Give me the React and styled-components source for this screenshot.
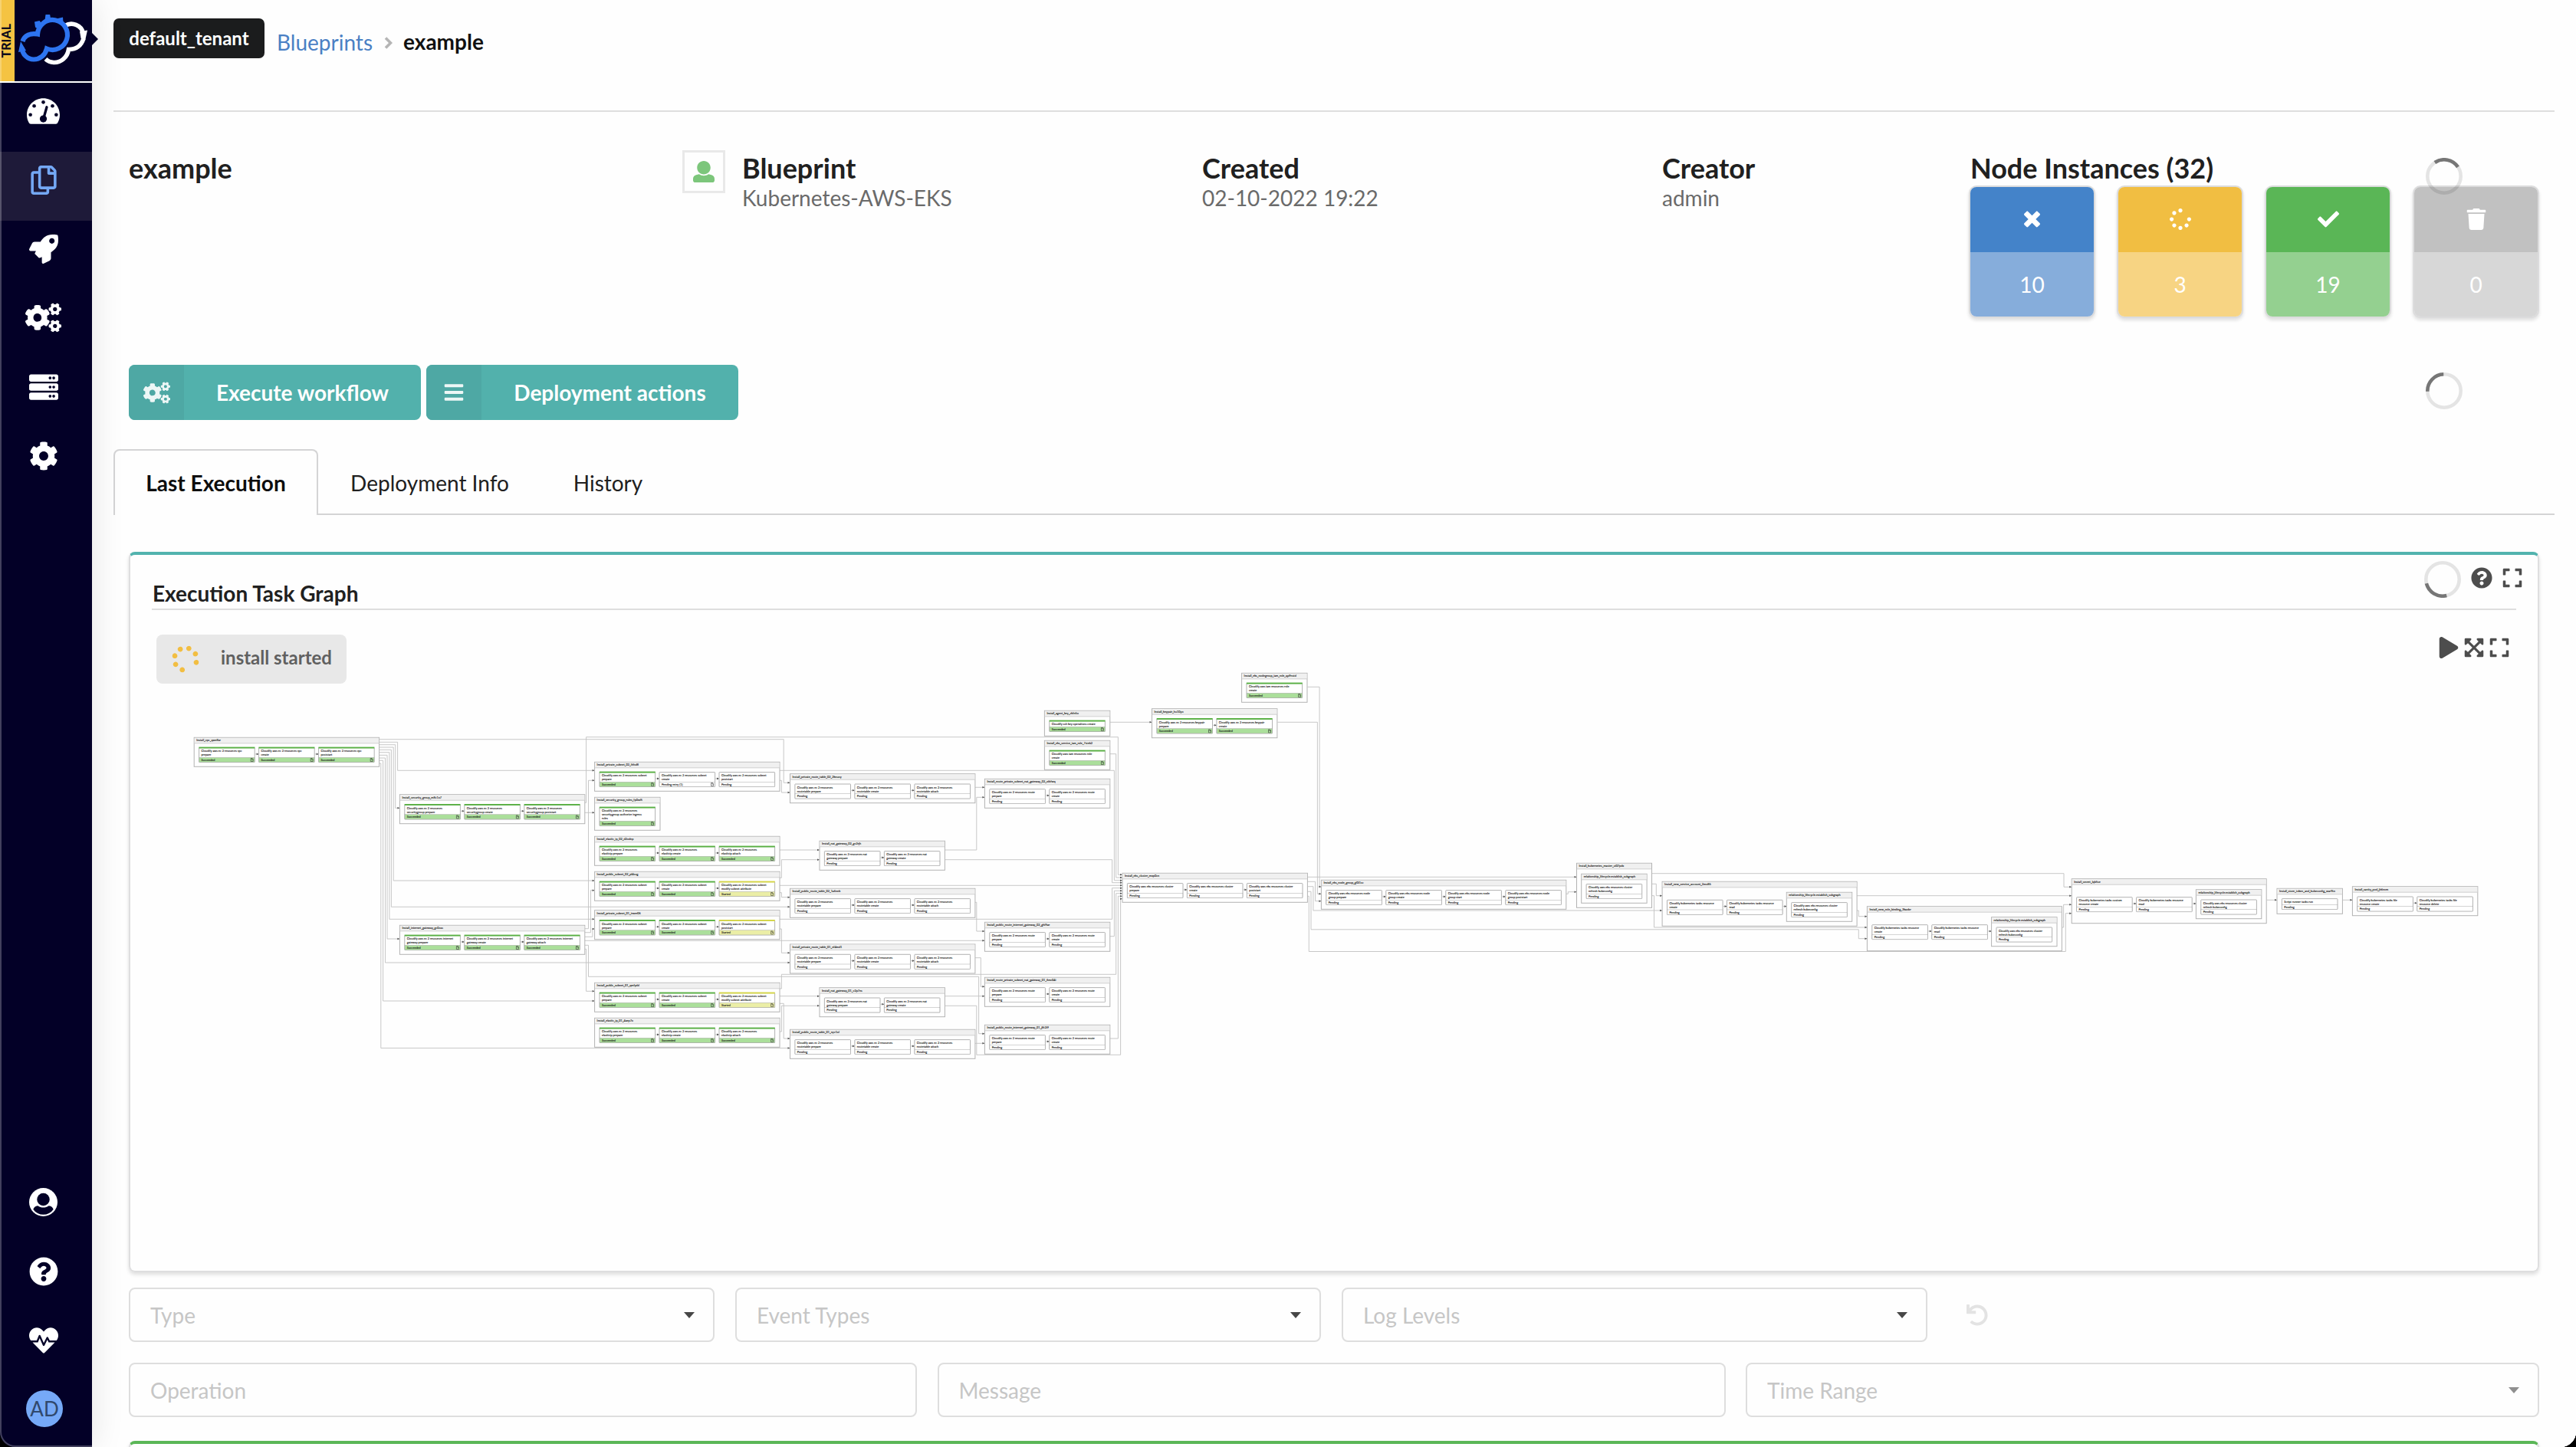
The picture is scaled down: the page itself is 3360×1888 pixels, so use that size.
import React from "react";
import styled, { createGlobalStyle } from "styled-components";
import {
  FaRegCopy,
  FaCogs,
  FaServer,
  FaCog,
  FaQuestionCircle,
  FaHeartbeat,
  FaBars,
  FaSpinner,
  FaCheck,
  FaTrash,
  FaExpand,
  FaPlay,
  FaExpandArrowsAlt,
  FaUndo,
} from "react-icons/fa";

const GlobalStyle = createGlobalStyle`
  *, *::before, *::after { box-sizing: border-box; }
  body {
    margin: 0;
    background: #fefefe;
    color: #222;
    font-family: Lato, "Open Sans", sans-serif;
    font-size: 28px;
    line-height: 40px;
    overflow: hidden;
  }
  svg { display: block; }
`;

/* ---------- shell ---------- */

const Shell = styled.div`
  position: relative;
  display: flex;
  width: 3360px;
  height: 1888px;
  overflow: hidden;
`;

const Sidebar = styled.nav`
  position: relative;
  z-index: 2;
  flex: none;
  display: flex;
  flex-direction: column;
  width: 120px;
  height: 1888px;
  background: #030027;
  color: #fff;
  box-shadow: 0 0 44px rgba(0, 0, 0, 0.11);

  &::before {
    content: "";
    position: absolute;
    inset: 0;
    z-index: 3;
    border-left: 2px solid rgba(255, 255, 255, 0.25);
    border-bottom: 2px solid rgba(255, 255, 255, 0.25);
    border-bottom-left-radius: 20px;
    pointer-events: none;
  }
`;

const Brand = styled.div`
  position: relative;
  display: flex;
  height: 108px;
  border-bottom: 2px solid #fff;

  &::after {
    content: "";
    position: absolute;
    left: 119px;
    top: 42px;
    border: 9px solid transparent;
    border-right: 0;
    border-left-color: #030027;
  }
`;

const Trial = styled.div`
  display: flex;
  align-items: center;
  width: 19px;
  height: 106px;
  background: #f5c342;
  color: #0c0c1c;
  font-size: 16px;
  font-weight: 900;

  span {
    writing-mode: vertical-rl;
    line-height: 15px;
    transform: rotate(180deg);
  }
`;

const NavItem = styled.a`
  flex: none;
  display: flex;
  align-items: center;
  justify-content: center;
  height: 90px;
  padding: 0 7px 17px 0;
  background: ${(p) => (p.$active ? "#1e1a39" : "transparent")};
  color: ${(p) => (p.$active ? "#74a8f5" : "#fff")};
`;

const NavSpacer = styled.div`
  flex: 1;
`;

const Avatar = styled.div`
  flex: none;
  display: flex;
  align-items: center;
  justify-content: center;
  width: 48px;
  height: 48px;
  margin: 12px 0 26px 34px;
  border-radius: 50%;
  background: #76a9f7;
  color: #30486c;
  font-size: 26px;
`;

const Main = styled.main`
  display: flex;
  flex-direction: column;
  width: 3240px;
  height: 1888px;
  padding: 24px 28px 0 28px;

  > * { flex: none; }
`;

const Corner = styled.div`
  position: absolute;
  z-index: 4;
  bottom: 0;
  ${(p) => (p.$right ? "right: 0;" : "left: 0;")}
  width: 20px;
  height: 20px;
  background: radial-gradient(
    circle at ${(p) => (p.$right ? "0 0" : "100% 0")},
    transparent 20px,
    #000 20.5px
  );
`;

/* ---------- header ---------- */

const TopBar = styled.header`
  display: flex;
  align-items: flex-start;
  height: 122px;
  border-bottom: 2px solid #dedede;
`;

const Tenant = styled.div`
  width: 197px;
  height: 52px;
  border-radius: 7px;
  background: #1b1c1d;
  color: #fff;
  font-size: 24px;
  font-weight: 700;
  line-height: 51px;
  text-align: center;
`;

const Crumbs = styled.div`
  display: flex;
  align-items: center;
  height: 61px;
  padding-left: 16px;
  color: #111;
`;

const CrumbLink = styled.a`
  color: #4a80c4;
`;

const Chevron = styled.svg`
  margin: 3px 14px 0 15px;
`;

const CrumbCurrent = styled.span`
  margin-top: -2px;
  font-weight: 700;
`;

const Summary = styled.section`
  display: flex;
  height: 330px;
  padding: 50px 0 0 20px;
`;

const SummaryCell = styled.div`
  flex: none;
  width: ${(p) => p.$w}px;
  display: flex;
  align-items: flex-start;
`;

const Stack = styled.div`
  display: flex;
  flex-direction: column;
`;

const Heading = styled.h2`
  margin: 0;
  height: 48px;
  font-size: 36px;
  font-weight: 700;
  line-height: 46px;
  color: #202020;
  white-space: nowrap;
`;

const Detail = styled.span`
  color: #6a6a6a;
  line-height: 34px;
  margin-top: -3px;
`;

const UserBox = styled.div`
  display: flex;
  align-items: center;
  justify-content: center;
  width: 56px;
  height: 56px;
  margin-right: 22px;
  border: 3px solid #e9e9e9;
  color: #7cc67b;
`;

const Cards = styled.div`
  display: flex;
  gap: 32px;
`;

const Card = styled.div`
  display: flex;
  flex-direction: column;
  width: 161px;
  height: 169px;
  border-radius: 8px;
  overflow: hidden;
  box-shadow: 0 0 0 2px #dcdcdd, 0 3px 4px 2px rgba(0, 0, 0, 0.12);
`;

const CardHalf = styled.div`
  display: flex;
  align-items: center;
  justify-content: center;
  flex: 1;
  background: ${(p) => p.$bg};
  color: #fff;
`;

const Actions = styled.div`
  display: flex;
  gap: 7px;
  height: 72px;
  padding-left: 20px;
`;

const ActionButton = styled.button`
  display: flex;
  width: ${(p) => p.$w}px;
  height: 72px;
  padding: 0;
  border: 0;
  border-radius: 8px;
  overflow: hidden;
  background: #52b1ac;
  color: #fff;
  font: 700 28px/72px Lato, sans-serif;
`;

const ActionIcon = styled.span`
  display: flex;
  align-items: center;
  justify-content: center;
  width: 72px;
  height: 72px;
  background: #4ea8a4;
  color: rgba(255, 255, 255, 0.9);
`;

const ActionLabel = styled.span`
  flex: 1;
  text-align: center;
`;

/* ---------- tabs ---------- */

const Tabs = styled.div`
  display: flex;
  height: 86px;
  margin-top: 38px;
`;

const Tab = styled.div`
  height: 86px;
  width: ${(p) => p.$w}px;
  line-height: 84px;
  padding-top: 2px;
  text-align: center;
  color: #202020;
  border-bottom: 2px solid #d4d4d5;
  ${(p) =>
    p.$active &&
    `
    color: #0d0d0d;
    font-weight: 700;
    border: 2px solid #d4d4d5;
    border-bottom: 0;
    border-radius: 8px 8px 0 0;
    padding-top: 0;
  `}
`;

const TabFill = styled.div`
  flex: 1;
  border-bottom: 2px solid #d4d4d5;
`;

/* ---------- widgets ---------- */

const Widget = styled.section`
  position: relative;
  width: 3144px;
  height: ${(p) => p.$h}px;
  margin: ${(p) => p.$mt}px 0 0 20px;
  padding: 0 28px;
  border: 2px solid #dededf;
  border-top: 4px solid ${(p) => p.$accent};
  border-radius: 8px;
  box-shadow: 0 3px 5px rgba(0, 0, 0, 0.13);
`;

const WidgetTitle = styled.h3`
  margin: 0 0 32px;
  padding: 32px 0 0 1px;
  height: 72px;
  border-bottom: 2px solid #dedede;
  font-size: 28px;
  font-weight: 700;
  line-height: 36px;
  color: #202020;
`;

const IconRow = styled.div`
  position: absolute;
  top: ${(p) => p.$top}px;
  right: ${(p) => p.$right}px;
  display: flex;
  align-items: center;
  gap: ${(p) => p.$gap}px;
  color: #4d4d4d;

  svg + svg { margin-bottom: ${(p) => p.$lift || 0}px; }
`;

const StatusLabel = styled.div`
  position: absolute;
  left: 34px;
  top: 104px;
  display: flex;
  align-items: center;
  width: 248px;
  height: 64px;
  padding-left: 20px;
  gap: 28px;
  border-radius: 8px;
  background: #e8e8e8;
  color: #606060;
  font-size: 24px;
  font-weight: 700;

  span { margin-top: -5px; }
  svg { color: #f2be42; transform: rotate(107deg); }
`;

const LoaderSpot = styled.div`
  position: absolute;
  left: ${(p) => p.$x}px;
  top: ${(p) => p.$y}px;
`;

/* ---------- filters ---------- */

const Filters = styled.div`
  display: flex;
  align-items: center;
  gap: ${(p) => p.$gap}px;
  margin: ${(p) => p.$mt}px 0 0 20px;
`;

const Field = styled.div`
  flex: none;
  display: flex;
  align-items: center;
  justify-content: space-between;
  width: ${(p) => p.$w}px;
  height: 71px;
  padding: 0 24px 0 26px;
  border: 2px solid #dedede;
  border-radius: 8px;
  color: #c6c6c6;
`;

const Caret = styled.i`
  border: 7.5px solid transparent;
  border-bottom: 0;
  border-top: 8px solid ${(p) => (p.$dim ? "#8f8f8f" : "#474747")};
`;

const Reset = styled.div`
  margin-left: 24px;
  color: #e3e3e3;
`;

/* ---------- drawings ---------- */

const Glyph = ({ box, d, width, height }) => (
  <svg viewBox={box} width={width} height={height} fill="currentColor">
    <path fillRule="evenodd" d={d} />
  </svg>
);

const ROCKET =
  "M505.1 19.1C503.8 13 499 8.2 492.9 6.9 460.7 0 435.5 0 410.4 0 307.2 0 245.3 55.2 199.1 128H94.9c-18.2 0-34.8 10.3-42.9 26.5L2.6 253.3c-8 16 3.6 34.7 21.5 34.7h95.1c-5.9 12.8-11.9 25.5-18 37.7-3.1 6.2-1.9 13.6 3 18.5l63.6 63.6c4.9 4.9 12.3 6.1 18.5 3 12.2-6.1 24.9-12 37.7-17.9V488c0 17.8 18.8 29.4 34.7 21.5l98.7-49.4c16.3-8.1 26.5-24.8 26.5-42.9V312.8c72.6-46.3 128-108.4 128-211.1.1-25.2.1-50.4-6.8-82.6zM400 160c-26.5 0-48-21.5-48-48s21.5-48 48-48 48 21.5 48 48-21.5 48-48 48z";
const USER =
  "M256 0c88.366 0 160 71.634 160 160s-71.634 160-160 160S96 248.366 96 160 167.634 0 256 0zm183.283 333.821l-71.313-17.828c-74.923 53.89-165.738 41.864-223.94 0l-71.313 17.828C29.981 344.505 0 382.903 0 426.955V464c0 26.51 21.49 48 48 48h416c26.51 0 48-21.49 48-48v-37.045c0-44.052-29.981-82.45-72.717-93.134z";
const CROSS =
  "M323.1 441l53.9-53.9c9.4-9.4 9.4-24.5 0-33.9L279.8 256l97.2-97.2c9.4-9.4 9.4-24.5 0-33.9L323.1 71c-9.4-9.4-24.5-9.4-33.9 0L192 168.2 94.8 71c-9.4-9.4-24.5-9.4-33.9 0L7 124.9c-9.4 9.4-9.4 24.5 0 33.9l97.2 97.2L7 353.2c-9.4 9.4-9.4 24.5 0 33.9L60.9 441c9.4 9.4 24.5 9.4 33.9 0l97.2-97.2 97.2 97.2c9.3 9.3 24.5 9.3 33.9 0z";

const Gauge = () => (
  <svg viewBox="0 32 576 448" width="43" height="34">
    <path
      fill="#fff"
      d="M288 32C128.94 32 0 160.94 0 320c0 52.8 14.25 102.26 39.06 144.8 5.61 9.62 16.3 15.2 27.44 15.2h443c11.14 0 21.83-5.58 27.44-15.2C561.75 422.26 576 372.8 576 320c0-159.06-128.94-288-288-288z"
    />
    <g fill="#030027">
      <circle cx="288" cy="100" r="31" />
      <circle cx="128" cy="165" r="31" />
      <circle cx="448" cy="165" r="31" />
      <circle cx="62" cy="320" r="31" />
      <circle cx="514" cy="320" r="31" />
      <circle cx="288" cy="390" r="62" />
    </g>
    <path d="M296 370L348 186" stroke="#030027" strokeWidth="44" strokeLinecap="round" />
  </svg>
);

const UserCircle = () => (
  <svg viewBox="0 0 512 512" width="37" height="37">
    <circle cx="256" cy="256" r="256" fill="#fff" />
    <circle cx="256" cy="208" r="114" fill="#030027" />
    <path
      fill="#030027"
      d="M74 386c10-38 38-58 82-66 60 46 140 46 200 0 44 8 72 28 82 66a220 220 0 0 1-364 0z"
    />
  </svg>
);

const Logo = () => (
  <svg width="101" height="106" viewBox="19 0 101 106" fill="none">
    <g stroke="#fff" strokeWidth="5.6">
      <path d="M85 33.5C94 28 106 33 108.500 43" />
      <path d="M109 50C106 60 99 64.500 89.500 64.500C88 75 79 82 70 81.500C66 81.300 62.500 80 59.500 77" />
    </g>
    <path fill="#fff" d="M104 41L114 39.500L111 53L105.500 50z" />
    <g stroke="#2d74f0" strokeWidth="6.200">
      <path d="M29.500 54C32 46 40 43 49 44.500A19.500 19.500 0 1 1 61 63.500C59 72 52 77.500 44 77.500C36 77.500 29 71 28.500 62" />
    </g>
    <path fill="#2d74f0" d="M27 54L34 66L24 68z" />
    <g fill="#2d74f0">
      <path d="M59.500 19h5.600l1.400 7h-8z" />
      <path d="M75.500 24l6.500 -1.500l0.500 8l-5.500 1z" />
      <path d="M45 28.500l6.500 -1.500l4 5l-5 6.500l-4.500 -3z" />
    </g>
  </svg>
);

const polar = (deg, r) => {
  const a = ((deg - 90) * Math.PI) / 180;
  return [24 + r * Math.cos(a), 24 + r * Math.sin(a)];
};

const Loader = ({ start }) => {
  const [x1, y1] = polar(start, 21.7);
  const [x2, y2] = polar(start + 90, 21.7);
  return (
    <svg width="48" height="48" fill="none" strokeWidth="4.600">
      <circle cx="24" cy="24" r="21.700" stroke="rgba(0,0,0,0.1)" />
      <path d={`M${x1} ${y1}A21.7 21.7 0 0 1 ${x2} ${y2}`} stroke="#767676" />
    </svg>
  );
};

/* ---------- task graph ---------- */

const ec2 = (kind, ops) => ops.map((op) => [`Cloudify aws ec 2 resources${kind[0]}`, `${kind[1]}${op}`]);
const subnet = (ops) => ec2([" subnet", ""], ops);
const route = ec2([" route", ""], ["prepare", "create"]);
const elasticIp = ec2(["", "elasticip "], ["prepare", "create", "attach"]);
const routeTable = ec2(["", "routetable "], ["prepare", "create", "attach"]);
const nat = ec2([" nat", "gateway "], ["prepare", "create"]);
const k8s = (lastA, a, lastB, b) => [
  [`Cloudify kubernetes tasks ${lastA}`, a],
  [`Cloudify kubernetes tasks ${lastB}`, b],
];

const groups = [
  [253.2, 962.3, "Install_vpc_qwe8xr", ec2([" vpc", ""], ["prepare", "create", "poststart"]), "SSS"],
  [521.4, 1036.7, "Install_security_group_m8c1o7", ec2(["", "securitygroup "], ["prepare", "create", "poststart"]), "SSS"],
  [521.4, 1207.3, "Install_internet_gateway_gc0zas", ec2([" internet", "gateway "], ["prepare", "create", "attach"]), "SSS"],
  [775.6, 994.3, "Install_private_subnet_02_ihfsd8", subnet(["prepare", "create", "poststart"]), "SRP"],
  [775.6, 1040.3, "Install_security_group_rules_fp0wl5", [["Cloudify aws ec 2 resources", "securitygroup authorize ingress", "rules"]], "S"],
  [775.6, 1091.3, "Install_elastic_ip_02_d2odnp", elasticIp, "SSS"],
  [775.6, 1137.3, "Install_public_subnet_02_pf4sug", subnet(["prepare", "create", "modify subnet attribute"]), "SST"],
  [775.6, 1187.7, "Install_private_subnet_01_irwer06", subnet(["prepare", "create", "poststart"]), "SST"],
  [775.6, 1282.3, "Install_public_subnet_01_qmfydd", subnet(["prepare", "create", "modify subnet attribute"]), "SST"],
  [775.6, 1328.3, "Install_elastic_ip_01_4aep7o", elasticIp, "SSS"],
  [1030.5, 1009.7, "Install_private_route_table_02_2knuoy", routeTable, "PPP"],
  [1030.5, 1159.3, "Install_public_route_table_02_1a6nnk", routeTable, "PPP"],
  [1030.5, 1232, "Install_private_route_table_01_nf4md1", routeTable, "PPP"],
  [1030.5, 1343.3, "Install_public_route_table_01_nyv1ol", routeTable, "PPP"],
  [1069, 1097.3, "Install_nat_gateway_02_gv2rjh", nat, "PP"],
  [1069, 1288.7, "Install_nat_gateway_01_v2p7ns", nat, "PP"],
  [1284.4, 1016.3, "Install_route_private_subnet_nat_gateway_02_oibfwq", route, "PP"],
  [1284.4, 1203.3, "Install_public_route_internet_gateway_02_ghi9ae", route, "PP"],
  [1284.4, 1275.3, "Install_route_private_subnet_nat_gateway_01_6mc04i", route, "PP"],
  [1284.4, 1337.3, "Install_public_route_internet_gateway_01_j8t2i9", route, "PP"],
  [1362.4, 927.3, "Install_agent_key_zkfn5o", [["Cloudify ssh key operations create"]], "S"],
  [1362.4, 966.3, "Install_eks_service_iam_role_7steb2", [["Cloudify aws iam resources role", "create"]], "S"],
  [1502.5, 924.7, "Install_keypair_hu10yo", ec2([" keypair", ""], ["prepare", "create"]), "SS"],
  [1619.6, 878.3, "Install_eks_nodegroup_iam_role_qp9nstd", [["Cloudify aws iam resources role", "create"]], "S"],
  [1464, 1139.3, "Install_eks_cluster_mxp0cn", ["prepare", "create", "poststart"].map((o) => ["Cloudify aws eks resources cluster", o]), "PPP"],
  [1723.4, 1148.3, "Install_eks_node_group_gl0i1sc", ["prepare", "create", "start", "poststart"].map((o) => ["Cloudify aws eks resources node", `group ${o}`]), "PPPP"],
  [2056.5, 1126.3, "Install_kubernetes_master_ui07pdx", [], "", true],
  [2168.1, 1150.3, "Install_new_service_account_2mo8fi", k8s("resource", "create", "resource", "read"), "PP", true],
  [2435.4, 1182.7, "Install_new_role_binding_3kaobr", k8s("resource", "create", "resource", "read"), "PP", true],
  [2702.2, 1146.7, "Install_secret_lqb5se", k8s("custom", "resource create", "resource", "read"), "PP", true],
  [2970, 1159.3, "Install_store_token_and_kubeconfig_war9tn", [["Script runner tasks run"]], "P"],
  [3068.4, 1156.7, "Install_sanity_pod_jh6nvm", k8s("file", "resource create", "file", "resource delete"), "PP"],
];

/* Each edge starts at x,y then alternates horizontal and vertical moves. */
const edges = [
  [494.6, 964.7, 1022.2, 1021.3, 1030.5],
  [494.6, 968.3, 518.6, 1005.3, 775.6],
  [494.6, 971.7, 515.7, 1054.3, 521.4],
  [494.6, 975, 513.2, 1149, 775.6],
  [494.6, 978.3, 510.4, 1183.3, 1030.5],
  [494.6, 981.7, 507.9, 1199.3, 775.6],
  [494.6, 985.3, 505, 1225, 521.4],
  [494.6, 989, 502.5, 1256, 1030.5],
  [494.6, 992.3, 499.6, 1306, 775.6],
  [494.6, 996, 496.8, 1367.5, 1030.5],
  [762.7, 1047.3, 764.6, 961.7, 1458.4, 1141.3, 1464],
  [762.7, 1060.3, 775.6],
  [762.7, 1211.7, 767.5, 1018.3, 775.6],
  [762.7, 1216.7, 770.4, 1161.7, 775.6],
  [762.7, 1222.3, 772.9, 1212, 775.6],
  [762.7, 1227.3, 1284.4],
  [762.7, 1233.3, 767.5, 1274.3, 1276.6, 1348.7, 1284.4],
  [762.7, 1238.3, 764.6, 1293.3, 775.6],
  [1016.7, 1005.3, 1453.4, 1148.7, 1464],
  [1016.7, 1018.3, 1019.4, 1034, 1030.5],
  [1271.5, 1027.3, 1284.4],
  [1016.7, 1109, 1069],
  [1232.5, 1109, 1273.8, 1040.3, 1284.4],
  [1232.5, 1121.7, 1450.6, 1151.7, 1464],
  [1016.7, 1145.3, 1019.4, 1121.7, 1069],
  [1016.7, 1155.3, 1464],
  [1016.7, 1164.7, 1019.4, 1170.7, 1030.5],
  [1271.5, 1177.3, 1273.8, 1215, 1284.4],
  [1016.7, 1199.3, 1450.6, 1158.7, 1464],
  [1016.7, 1212, 1019.4, 1243.3, 1030.5],
  [1271.5, 1249.7, 1279.3, 1287.3, 1284.4],
  [1447.7, 1221.7, 1453.4, 1162.3, 1464],
  [1016.7, 1290, 1019.4, 1271.3, 1455.7, 1165.7, 1464],
  [1016.7, 1299.7, 1069],
  [1016.7, 1309.3, 1022.2, 1355, 1030.5],
  [1016.7, 1346, 1019.4, 1312.3, 1069],
  [1232.5, 1299.7, 1284.4],
  [1232.5, 1312.3, 1273.8, 1376.3, 1461.6, 1172.7, 1464],
  [1271.5, 1361.3, 1284.4],
  [1447.7, 1355, 1458.4, 1169.3, 1464],
  [1447.7, 942.3, 1502.5],
  [1447.7, 983.7, 1455.7, 1145, 1464],
  [1666.5, 942.3, 1718.4, 1166.3, 1723.4],
  [1705.5, 896.3, 1721.1, 1157, 1723.4],
  [1705.5, 1144.3, 2056.5],
  [1705.5, 1150.3, 1715.6, 1175.7, 1723.4],
  [1705.5, 1156.7, 1712.9, 1188, 2168.1],
  [1705.5, 1163.3, 1710, 1212.8, 2424.3, 1224.7, 2435.4],
  [1705.5, 1169.3, 1707.3, 1241.5, 2694.3, 1191.7, 2702.2],
  [2042.5, 1166.3, 2045.3, 1163.7, 2056.5],
  [2154.3, 1139.7, 2692, 1157.3, 2702.2],
  [2154.3, 1153.3, 2160.3, 1168.7, 2168.1],
  [2154.3, 1168.7, 2157.5, 1210, 2435.4],
  [2421.6, 1168.7, 2702.2],
  [2421.6, 1188, 2424.3, 1195.7, 2435.4],
  [2689.7, 1210, 2691.6, 1180.3, 2702.2],
  [2956.7, 1174.3, 2970],
  [3055.7, 1174.3, 3068.4],
];

const STATUS = {
  S: { label: "Succeeded", bar: "#58b043", foot: "#abdf9b", doc: true },
  T: { label: "Started", bar: "#d4d545", foot: "#ebeea6", doc: true },
  R: { label: "Pending retry (1)", foot: "#fff", doc: true },
  P: { label: "Pending", foot: "#fff" },
};

const GraphText = styled.text`
  font-family: Lato, sans-serif;
  font-size: 3.8px;
  font-weight: 400;
  fill: #111;
  stroke: #111;
  stroke-width: 0.1px;
`;

const Edge = ({ points }) => {
  const [x, y, ...rest] = points;
  const d = rest.map((v, i) => (i % 2 ? `V${v}` : `H${v}`)).join("");
  const end = rest[rest.length - 1];
  const endY = rest.length > 1 ? rest[rest.length - 2] : y;
  return (
    <g>
      <path d={`M${x} ${y}${d}`} fill="none" stroke="#c2c2c2" strokeWidth="0.9" />
      <path d={`M${end - 3} ${endY - 1.3}L${end} ${endY}L${end - 3} ${endY + 1.3}z`} fill="#555" />
    </g>
  );
};

const Task = ({ x, y, lines, status }) => {
  const s = STATUS[status];
  const foot = 2.7 + lines.length * 5;
  return (
    <g transform={`translate(${x} ${y})`}>
      <rect width="72.6" height={foot + 6.2} rx="0.6" fill="#fff" stroke="#a9a9a9" strokeWidth="0.9" />
      <rect x="0.2" y={foot} width="72.2" height="6.2" fill={s.foot} stroke="#a9a9a9" strokeWidth="0.5" />
      {s.bar && <rect x="-0.2" y="-1" width="73" height="1.9" fill={s.bar} />}
      {lines.map((l, i) => (
        <GraphText key={i} x="2.9" y={5.6 + i * 5}>
          {l}
        </GraphText>
      ))}
      <GraphText x="2.9" y={foot + 4.6}>{s.label}</GraphText>
      {s.doc && (
        <path
          d={`M67.6 ${foot + 1.2}h2l1 1v3h-3zM69 ${foot + 1.4}v1.400h1.400`}
          fill="none"
          stroke="#333"
          strokeWidth="0.6"
        />
      )}
    </g>
  );
};

const Group = ({ x, y, title, tasks, status, nested }) => {
  const count = tasks.length;
  const lines = Math.max(1, ...tasks.map((t) => t.length));
  const width = nested ? count * 78 + 98 : count * 78 + 7.4;
  const height = nested ? 58 : 28 + lines * 5;
  const taskY = nested ? 24 : 13.3;
  return (
    <g transform={`translate(${x} ${y})`}>
      <rect width={width} height={height} fill="#fefefe" stroke="#b3b3b3" strokeWidth="1" />
      <rect x="0.5" y="0.5" width={width - 1} height="7" fill="#f0f0f0" />
      <path d={`M0 7.500H${width}`} stroke="#c8c8c8" strokeWidth="0.8" />
      <GraphText x="3" y="5.2">{title}</GraphText>
      {tasks.map((t, i) => (
        <g key={i}>
          <Task x={6.4 + i * 78} y={taskY} lines={t} status={status[i]} />
          {(i < count - 1 || nested) && (
            <Edge points={[79 + i * 78, taskY + 8.3, 84.4 + i * 78]} />
          )}
        </g>
      ))}
      {nested && (
        <Group
          x={6.2 + count * 78}
          y={14}
          title="relationship_lifecycle.establish_subgraph"
          tasks={[["Cloudify aws eks resources cluster", "refresh kubeconfig"]]}
          status="P"
        />
      )}
    </g>
  );
};

const TaskGraph = () => (
  <svg width="3084" height="802" viewBox="198 828 3084 802">
    {edges.map((e, i) => (
      <Edge key={i} points={e} />
    ))}
    {groups.map(([x, y, title, tasks, status, nested]) => (
      <Group key={title} x={x} y={y} title={title} tasks={tasks} status={status} nested={nested} />
    ))}
  </svg>
);

/* ---------- page ---------- */

const cards = [
  { top: "#4483c9", bottom: "#86addb", count: 10, icon: <Glyph box="0 0 384 512" d={CROSS} width={21} height={28} /> },
  { top: "#f1be42", bottom: "#f7d483", count: 3, icon: <FaSpinner size={28} /> },
  { top: "#5ab656", bottom: "#94d090", count: 19, icon: <FaCheck size={28} /> },
  { top: "#c1c1c1", bottom: "#d7d7d7", count: 0, icon: <FaTrash size={28} /> },
];

export default function App() {
  return (
    <Shell>
      <GlobalStyle />
      <Sidebar>
        <Brand>
          <Trial><span>TRIAL</span></Trial>
          <Logo />
        </Brand>
        <NavItem><Gauge /></NavItem>
        <NavItem $active><FaRegCopy size={38} /></NavItem>
        <NavItem><Glyph box="0 0 512 512" d={ROCKET} width={38} height={38} /></NavItem>
        <NavItem><FaCogs size={47} /></NavItem>
        <NavItem><FaServer size={38} /></NavItem>
        <NavItem><FaCog size={38} /></NavItem>
        <NavSpacer />
        <NavItem><UserCircle /></NavItem>
        <NavItem><FaQuestionCircle size={38} /></NavItem>
        <NavItem><FaHeartbeat size={38} /></NavItem>
        <Avatar>AD</Avatar>
      </Sidebar>

      <Main>
        <TopBar>
          <Tenant>default_tenant</Tenant>
          <Crumbs>
            <CrumbLink>Blueprints</CrumbLink>
            <Chevron width="11" height="16" fill="none" stroke="#b5b5b5" strokeWidth="3.6">
              <path d="M2 1.500L8.500 8L2 14.500" />
            </Chevron>
            <CrumbCurrent>example</CrumbCurrent>
          </Crumbs>
        </TopBar>

        <Summary>
          <SummaryCell $w={722}>
            <Heading>example</Heading>
          </SummaryCell>
          <SummaryCell $w={678}>
            <UserBox>
              <Glyph box="0 0 512 512" d={USER} width={28} height={28} />
            </UserBox>
            <Stack>
              <Heading>Blueprint</Heading>
              <Detail>Kubernetes-AWS-EKS</Detail>
            </Stack>
          </SummaryCell>
          <SummaryCell $w={600}>
            <Stack>
              <Heading>Created</Heading>
              <Detail>02-10-2022 19:22</Detail>
            </Stack>
          </SummaryCell>
          <SummaryCell $w={402}>
            <Stack>
              <Heading>Creator</Heading>
              <Detail>admin</Detail>
            </Stack>
          </SummaryCell>
          <Stack>
            <Heading>Node Instances (32)</Heading>
            <Cards>
              {cards.map((c) => (
                <Card key={c.top}>
                  <CardHalf $bg={c.top}>{c.icon}</CardHalf>
                  <CardHalf $bg={c.bottom}>{c.count}</CardHalf>
                </Card>
              ))}
            </Cards>
          </Stack>
        </Summary>

        <Actions>
          <ActionButton $w={381}>
            <ActionIcon><FaCogs size={35} /></ActionIcon>
            <ActionLabel>Execute workflow</ActionLabel>
          </ActionButton>
          <ActionButton $w={407}>
            <ActionIcon><FaBars size={28} /></ActionIcon>
            <ActionLabel>Deployment actions</ActionLabel>
          </ActionButton>
        </Actions>

        <Tabs>
          <Tab $active $w={267}>Last Execution</Tab>
          <Tab $w={291}>Deployment Info</Tab>
          <Tab $w={174}>History</Tab>
          <TabFill />
        </Tabs>

        <Widget $h={940} $mt={48} $accent="#52b3ae">
          <WidgetTitle>Execution Task Graph</WidgetTitle>
          <TaskGraph />
          <StatusLabel>
            <FaSpinner size={36} />
            <span>install started</span>
          </StatusLabel>
          <IconRow $top={8} $right={19} $gap={12.5} $lift={5}>
            <Loader start={166} />
            <FaQuestionCircle size={28} />
            <FaExpand size={28} />
          </IconRow>
          <IconRow $top={107} $right={36} $gap={5}>
            <FaPlay size={28} />
            <FaExpandArrowsAlt size={28} />
            <FaExpand size={28} />
          </IconRow>
        </Widget>

        <Filters $mt={20} $gap={27}>
          <Field $w={764}>Type<Caret /></Field>
          <Field $w={764}>Event Types<Caret /></Field>
          <Field $w={764}>Log Levels<Caret /></Field>
          <Reset><FaUndo size={28} /></Reset>
        </Filters>
        <Filters $mt={27} $gap={26.5}>
          <Field $w={1028}>Operation</Field>
          <Field $w={1028}>Message</Field>
          <Field $w={1035}>Time Range<Caret $dim /></Field>
        </Filters>

        <Widget $h={60} $mt={31} $accent="#5bb757" />
      </Main>

      <LoaderSpot $x={3164} $y={206}><Loader start={-34} /></LoaderSpot>
      <LoaderSpot $x={3164} $y={486}><Loader start={-92} /></LoaderSpot>
      <Corner />
      <Corner $right />
    </Shell>
  );
}
